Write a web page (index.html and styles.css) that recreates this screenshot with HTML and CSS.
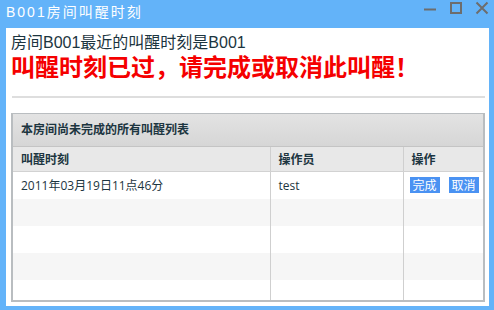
FILE: index.html
```html
<!DOCTYPE html>
<html lang="zh-CN">
<head>
    <meta charset="utf-8">
    <title>B001房间叫醒时刻</title>
    <link rel="stylesheet" href="styles.css">
</head>
<body>
<div class="win">
    <div class="win-title">
        <h1>B001房间叫醒时刻</h1>
        <div class="win-ctrl">
            <svg width="14" height="14" viewBox="0 0 14 14"><path d="M1 8.5h12" stroke="#6d6d6d" stroke-width="2"/></svg>
            <svg width="14" height="14" viewBox="0 0 14 14"><rect x="2" y="2" width="10" height="10" fill="none" stroke="#6d6d6d" stroke-width="2"/></svg>
            <svg width="14" height="14" viewBox="0 0 14 14"><path d="M1.5 1.5l11 11M12.5 1.5l-11 11" stroke="#6d6d6d" stroke-width="2"/></svg>
        </div>
    </div>
    <div class="win-body">
        <p class="info">房间B001最近的叫醒时刻是B001</p>
        <p class="warn">叫醒时刻已过，请完成或取消此叫醒！</p>
        <div class="line"></div>
        <div class="panel">
            <div class="panel-hd">本房间尚未完成的所有叫醒列表</div>
            <table class="grid">
                <tr><th class="c1">叫醒时刻</th><th class="c2">操作员</th><th class="c3">操作</th></tr>
                <tr><td>2011年03月19日11点46分</td><td>test</td><td class="ops"><a class="btn">完成</a><a class="btn">取消</a></td></tr>
                <tr class="alt"><td></td><td></td><td></td></tr>
                <tr><td></td><td></td><td></td></tr>
                <tr class="alt"><td></td><td></td><td></td></tr>
                <tr class="last"><td></td><td></td><td></td></tr>
            </table>
        </div>
    </div>
</div>
</body>
</html>
```
FILE: styles.css
```css
html,body{margin:0;padding:0;}
body{background:#63b3f9;font-family:"Liberation Sans","Noto Sans CJK SC",sans-serif;width:494px;height:310px;overflow:hidden;}
.win{height:310px;display:flex;flex-direction:column;}
.win-title{height:28px;display:flex;align-items:flex-start;justify-content:space-between;}
.win-title h1{margin:0;padding:3px 0 0 6px;font-size:14px;font-weight:normal;color:#fff;letter-spacing:2px;line-height:18px;}
.win-ctrl{display:flex;gap:12px;padding:1px 5px 0 0;}
.win-body{flex:1;background:#fff;margin:0 5px 4px 6px;padding:6px 4px 0 5px;}
.info{margin:0;font-size:16px;line-height:18px;color:#1c3540;}
.warn{margin:1px 0 0;font-size:24px;line-height:30px;font-weight:bold;color:#f50000;}
.line{height:2px;background:#dedede;margin:13px 0 15px 1px;}
.panel{border:2px solid #b9bdc0;border-top-width:1px;border-left-width:2px;}
.panel-hd{height:32px;line-height:32px;padding-left:8px;font-size:12px;font-weight:bold;color:#1c3540;background:linear-gradient(#e3e3e3,#d6d6d6);border-bottom:1px solid #c4c4c4;}
.grid{width:100%;table-layout:fixed;border-collapse:collapse;font-size:12px;color:#1c3540;font-family:"Open Sans","Noto Sans CJK SC",sans-serif;}
.grid th{height:24px;background:#e8e8e8;text-align:left;padding:0 0 0 8px;border-bottom:1px solid #d2d2d2;font-weight:bold;box-sizing:border-box;}
.grid td{height:27px;padding:0 0 0 8px;white-space:nowrap;}
.grid th+th,.grid td+td{border-left:1px solid #cfcfcf;}
.grid .c1{width:257px;}
.grid .c2{width:133px;}
.grid td.ops{padding-left:6px;}
.grid tr.alt td{background:#f6f6f6;}
.grid tr.last td{height:20px;}
.btn{display:inline-block;background:#4a92f2;color:#fff;padding:0 3px;line-height:16px;margin-right:9px;font-size:12px;font-family:"Noto Sans CJK SC",sans-serif;}
```
